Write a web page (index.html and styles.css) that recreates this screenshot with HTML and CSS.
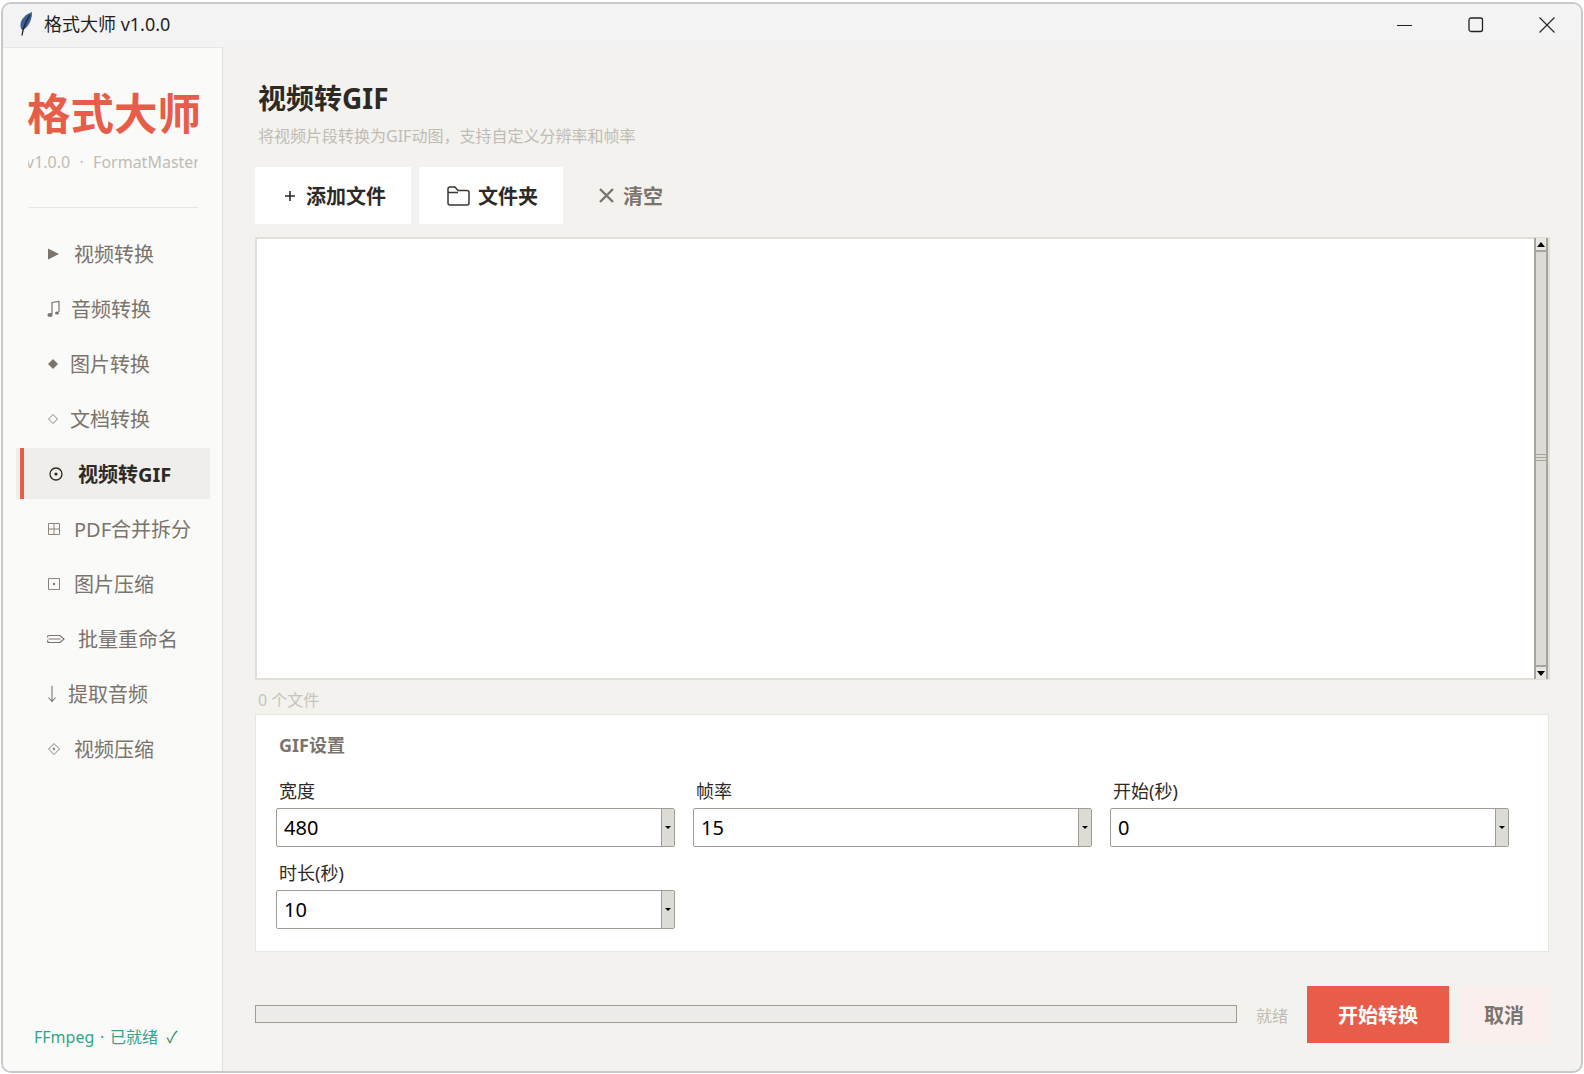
FILE: index.html
```html
<!DOCTYPE html>
<html lang="zh-CN">

<head>
    <meta charset="UTF-8">
    <title>格式大师 v1.0.0</title>
    <link rel="stylesheet" href="styles.css">
</head>

<body>

    <div class="window">
        <!-- Title bar -->
        <div class="titlebar">
            <svg class="app-icon" width="14" height="24" viewBox="0 0 14 24">
                <path d="M13 0C7 2 2 7 1.500 12 1.300 15 2 17 3 18 7 17 10 13 11.800 8 12.800 5 13 2 13 0z" fill="#3b5f8f"/>
                <path d="M11 3C8 8 4.500 13 3 23.500" fill="none" stroke="#1b1f2a" stroke-width="1.300"/>
            </svg>
            <span class="app-title">格式大师 v1.0.0</span>
            <div class="win-buttons">
                <svg width="16" height="16" viewBox="0 0 16 16"><path d="M0 8.500h15" stroke="#222" fill="none"/></svg>
                <svg width="16" height="16" viewBox="0 0 16 16"><rect x="1" y="1" width="13.500" height="13.500" rx="2" stroke="#222" stroke-width="1.300" fill="none"/></svg>
                <svg width="16" height="16" viewBox="0 0 16 16"><path d="M.5 .5l15 15M15.500 .5l-15 15" stroke="#222" stroke-width="1.100" fill="none"/></svg>
            </div>
        </div>

        <div class="content">
            <!-- Sidebar -->
            <div class="sidebar">
                <div class="logo">格式大师</div>
                <div class="version"><span>v1.0.0 &nbsp;·&nbsp; FormatMaster</span></div>
                <div class="divider"></div>

                <div class="nav">
                    <div class="nav-item">
                        <svg class="nav-icon" width="14" height="14" viewBox="0 0 14 14"><path d="M1 1.500L12 7 1 12.500z" fill="#7a746c"/></svg>
                        <span>视频转换</span>
                    </div>
                    <div class="nav-item">
                        <svg class="nav-icon narrow" width="13" height="20" viewBox="0 0 13 20"><path d="M5 15V3.500l7-1V13" fill="none" stroke="#7a746c" stroke-width="1.200"/><ellipse cx="3" cy="16" rx="2.600" ry="1.900" fill="#7a746c"/><ellipse cx="10" cy="14" rx="2" ry="1.500" fill="#7a746c"/></svg>
                        <span>音频转换</span>
                    </div>
                    <div class="nav-item">
                        <svg class="nav-icon narrow" width="12" height="12" viewBox="0 0 12 12"><path d="M6 1l5 5-5 5-5-5z" fill="#7a746c"/></svg>
                        <span>图片转换</span>
                    </div>
                    <div class="nav-item">
                        <svg class="nav-icon narrow" width="12" height="12" viewBox="0 0 12 12"><path d="M6 1.500L10.500 6 6 10.500 1.500 6z" fill="none" stroke="#8a847c"/></svg>
                        <span>文档转换</span>
                    </div>
                    <div class="nav-item active">
                        <svg class="nav-icon target" width="14" height="14" viewBox="0 0 14 14"><circle cx="7" cy="7" r="6" fill="none" stroke="#2d2a26" stroke-width="1.300"/><circle cx="7" cy="7" r="1.600" fill="#2d2a26"/></svg>
                        <span>视频转GIF</span>
                    </div>
                    <div class="nav-item">
                        <svg class="nav-icon" width="14" height="14" viewBox="0 0 14 14"><path d="M1.500 1.500h11v11h-11zM7 1.500v11M1.500 7h11" fill="none" stroke="#8a847c"/></svg>
                        <span>PDF合并拆分</span>
                    </div>
                    <div class="nav-item">
                        <svg class="nav-icon" width="14" height="14" viewBox="0 0 14 14"><path d="M1.500 1.500h11v11h-11z" fill="none" stroke="#8a847c"/><rect x="6" y="6" width="2" height="2" fill="#7a746c"/></svg>
                        <span>图片压缩</span>
                    </div>
                    <div class="nav-item">
                        <svg class="nav-icon pencil" width="18" height="12" viewBox="0 0 18 12"><path d="M3 2.500h10l4 3.500-4 3.500H3a3.500 3.500 0 0 1 0-7zM1.500 6h12" fill="none" stroke="#7a746c" stroke-width="1.200"/></svg>
                        <span>批量重命名</span>
                    </div>
                    <div class="nav-item">
                        <svg class="nav-icon arrow" width="10" height="18" viewBox="0 0 10 18"><path d="M5 1v15M1.500 12.500L5 16.500l3.500-4" fill="none" stroke="#7a746c" stroke-width="1.100"/></svg>
                        <span>提取音频</span>
                    </div>
                    <div class="nav-item">
                        <svg class="nav-icon" width="14" height="14" viewBox="0 0 14 14"><path d="M7 1.500L12.500 7 7 12.500 1.500 7z" fill="none" stroke="#8a847c"/><rect x="6" y="6" width="2" height="2" transform="rotate(45 7 7)" fill="#7a746c"/></svg>
                        <span>视频压缩</span>
                    </div>
                </div>

                <div class="ffmpeg-status">FFmpeg · 已就绪 <span class="check">✓</span></div>
            </div>

            <!-- Main panel -->
            <div class="main">
                <h1>视频转GIF</h1>
                <p class="subtitle">将视频片段转换为GIF动图，支持自定义分辨率和帧率</p>

                <div class="toolbar">
                    <button class="tool-btn add">
                        <svg width="10" height="10" viewBox="0 0 10 10"><path d="M5 0v10M0 5h10" stroke="#2d2a26" stroke-width="1.600"/></svg>
                        添加文件
                    </button>
                    <button class="tool-btn folder">
                        <svg width="23" height="20" viewBox="0 0 23 20"><path d="M1 17V3a2 2 0 0 1 2-2h5l3 3.500h9a2 2 0 0 1 2 2V17a2 2 0 0 1-2 2H3a2 2 0 0 1-2-2zM1 6.500h10" fill="none" stroke="#3a3733" stroke-width="1.500"/></svg>
                        文件夹
                    </button>
                    <button class="tool-btn clear">
                        <svg width="15" height="15" viewBox="0 0 15 15"><path d="M1 1l13 13M14 1L1 14" stroke="#7a746c" stroke-width="2.400"/></svg>
                        清空
                    </button>
                </div>

                <div class="file-list">
                    <div class="file-area"></div>
                    <div class="scrollbar">
                        <div class="scroll-btn"><span class="arrow-up"></span></div>
                        <div class="scroll-thumb"><span class="grip"></span></div>
                        <div class="scroll-btn"><span class="arrow-down"></span></div>
                    </div>
                </div>

                <div class="file-count">0 个文件</div>

                <div class="settings">
                    <div class="settings-title">GIF设置</div>
                    <div class="settings-grid">
                        <div class="field">
                            <label>宽度</label>
                            <div class="combo"><span class="combo-value">480</span><span class="combo-btn"><i></i></span></div>
                        </div>
                        <div class="field">
                            <label>帧率</label>
                            <div class="combo"><span class="combo-value">15</span><span class="combo-btn"><i></i></span></div>
                        </div>
                        <div class="field">
                            <label>开始(秒)</label>
                            <div class="combo"><span class="combo-value">0</span><span class="combo-btn"><i></i></span></div>
                        </div>
                        <div class="field">
                            <label>时长(秒)</label>
                            <div class="combo"><span class="combo-value">10</span><span class="combo-btn"><i></i></span></div>
                        </div>
                    </div>
                </div>

                <div class="footer">
                    <div class="progress"></div>
                    <span class="status">就绪</span>
                    <button class="start-btn">开始转换</button>
                    <button class="cancel-btn">取消</button>
                </div>
            </div>
        </div>
    </div>

</body>

</html>
```

FILE: styles.css
```css
* {
    box-sizing: border-box;
}

body {
    font-family: "Noto Sans", "Noto Sans CJK SC", sans-serif;
    background-color: #ffffff;
    margin: 0;
    padding: 2px 1px 1px 1px;
}

.window {
    height: 1071px;
    border: 2px solid #c9c9c9;
    border-radius: 10px;
    overflow: hidden;
    display: flex;
    flex-direction: column;
    background-color: #f3f2ee;
}

/* Title bar */
.titlebar {
    height: 43px;
    flex-shrink: 0;
    display: flex;
    align-items: center;
    padding-left: 16px;
    background-color: #f3f3f3;
}

.app-icon {
    margin-bottom: 4px;
}

.app-title {
    margin: 0 0 6px 11px;
    font-size: 18px;
    color: #1f1f1f;
}

.win-buttons {
    margin: 0 0 2px auto;
    display: flex;
    gap: 55px;
    padding-right: 26px;
}

.content {
    flex: 1;
    display: flex;
    min-height: 0;
}

/* Sidebar */
.sidebar {
    width: 220px;
    flex-shrink: 0;
    display: flex;
    flex-direction: column;
    background-color: #fafaf8;
    border-top: 1px solid #e9e7e3;
    border-right: 1px solid #e3e0dc;
}

.logo {
    margin: 30px 0 0 24px;
    width: 176px;
    font-size: 43.500px;
    line-height: 70px;
    font-weight: 700;
    color: #e85d4a;
    white-space: nowrap;
}

.version {
    margin: 2px 0 0 25px;
    width: 170px;
    display: flex;
    font-size: 16px;
    line-height: 24px;
    color: #c0bcb5;
    white-space: nowrap;
    overflow: hidden;
}

.version span {
    flex-shrink: 0;
    margin-left: -2px;
    word-spacing: 0.500px;
}

.divider {
    margin: 33px 0 0 25px;
    width: 170px;
    height: 1px;
    background-color: #e8e6e2;
}

.nav {
    margin-top: 20px;
    display: flex;
    flex-direction: column;
    gap: 4px;
}

.nav-item {
    position: relative;
    margin-left: 13px;
    width: 194px;
    height: 51px;
    padding-left: 31px;
    display: flex;
    align-items: center;
    gap: 13px;
    font-size: 20px;
    color: #7a746c;
}

.nav-icon.narrow {
    margin-right: -2px;
}

.nav-icon.target {
    margin: 0 2px 0 2px;
}

.nav-icon.arrow {
    margin-right: -2px;
}

.nav-item.active {
    background-color: #f0eeea;
    color: #2d2a26;
    font-weight: 700;
}

.nav-item.active::before {
    content: "";
    position: absolute;
    left: 4px;
    top: 0;
    bottom: 0;
    width: 4px;
    background-color: #e85d4a;
}

.ffmpeg-status {
    margin: auto 0 22px 31px;
    font-size: 16px;
    line-height: 24px;
    word-spacing: 1.500px;
    color: #2fa58a;
}

.check {
    margin-left: 3px;
    color: #2f8f66;
}

/* Main panel */
.main {
    flex: 1;
    min-width: 0;
    padding: 31px 31px 0 32px;
    display: flex;
    flex-direction: column;
}

h1 {
    margin: 0 0 0 3px;
    font-size: 28px;
    line-height: 40px;
    font-weight: 700;
    color: #2d2a26;
}

.subtitle {
    margin: 6px 0 0 3px;
    font-size: 16px;
    line-height: 24px;
    color: #c0bcb5;
}

.toolbar {
    margin-top: 19px;
    display: flex;
    gap: 8px;
}

button {
    font-family: inherit;
    border: none;
    cursor: pointer;
}

.tool-btn {
    height: 57px;
    display: flex;
    align-items: center;
    font-size: 20px;
    font-weight: 700;
    color: #2d2a26;
    background-color: #ffffff;
}

.tool-btn.add {
    width: 156px;
    padding-left: 30px;
    gap: 11px;
}

.tool-btn.folder {
    width: 144px;
    padding-left: 28px;
    gap: 8px;
}

.tool-btn.clear {
    padding-left: 28px;
    gap: 9px;
    background-color: transparent;
    color: #7a746c;
}

/* File list */
.file-list {
    margin-top: 13px;
    height: 443px;
    display: flex;
    background-color: #ffffff;
    border: 2px solid #e2dfd9;
}

.file-area {
    flex: 1;
}

.scrollbar {
    width: 14px;
    margin: -1px 0;
    display: flex;
    flex-direction: column;
    background-color: #dcdbd6;
    border-left: 2px solid #a8a49c;
    border-right: 2px solid #a8a49c;
}

.scroll-btn {
    height: 12px;
    flex-shrink: 0;
    display: flex;
    align-items: center;
    justify-content: center;
    background-color: #e8e7e3;
}

.arrow-up,
.arrow-down {
    width: 0;
    height: 0;
    border-left: 4px solid transparent;
    border-right: 4px solid transparent;
}

.arrow-up {
    border-bottom: 5px solid #000000;
}

.arrow-down {
    border-top: 5px solid #000000;
}

.scroll-thumb {
    flex: 1;
    display: flex;
    align-items: center;
    justify-content: center;
    border-top: 2px solid #a8a49c;
    border-bottom: 2px solid #a8a49c;
}

.grip {
    width: 10px;
    height: 9px;
    background-image: repeating-linear-gradient(#a8a49c 0 1px, transparent 1px 3px);
}

.file-count {
    margin: 8px 0 0 3px;
    font-size: 16px;
    line-height: 24px;
    color: #c8c4bc;
}

/* Settings card */
.settings {
    height: 238px;
    margin: 2px 1px 0 0;
    padding: 15px 39px 0 20px;
    background-color: #ffffff;
    border: 1px solid #e8e6e1;
}

.settings-title {
    margin-left: 3px;
    font-size: 18px;
    line-height: 30px;
    font-weight: 700;
    color: #7a746c;
}

.settings-grid {
    margin-top: 15px;
    display: grid;
    grid-template-columns: repeat(3, 1fr);
    column-gap: 18px;
    row-gap: 10px;
}

.field label {
    display: block;
    margin-left: 3px;
    font-size: 18px;
    line-height: 33px;
    color: #2d2a26;
}

.combo {
    height: 39px;
    display: flex;
    background-color: #ffffff;
    border: 1px solid #a09c94;
    border-radius: 2px;
}

.combo-value {
    flex: 1;
    padding-left: 7px;
    font-size: 20px;
    line-height: 37px;
    color: #000000;
}

.combo-btn {
    width: 13px;
    display: flex;
    align-items: center;
    justify-content: center;
    background-color: #dcdbd6;
    border-left: 1px solid #a09c94;
}

.combo-btn i {
    width: 0;
    height: 0;
    border-left: 3px solid transparent;
    border-right: 3px solid transparent;
    border-top: 3px solid #000000;
}

/* Footer */
.footer {
    margin-top: 34px;
    display: flex;
    align-items: center;
}

.progress {
    width: 982px;
    height: 18px;
    margin-bottom: 1px;
    background-color: #eeece8;
    border: 1px solid #a09c94;
}

.status {
    margin-left: 19px;
    width: 51px;
    font-size: 16px;
    color: #c0bcb5;
}

.start-btn,
.cancel-btn {
    height: 57px;
    font-size: 20px;
    font-weight: 700;
}

.start-btn {
    width: 142px;
    color: #ffffff;
    background-color: #e85d4a;
}

.cancel-btn {
    width: 90px;
    margin-left: 10px;
    color: #7a746c;
    background-color: #fbefed;
}
```
